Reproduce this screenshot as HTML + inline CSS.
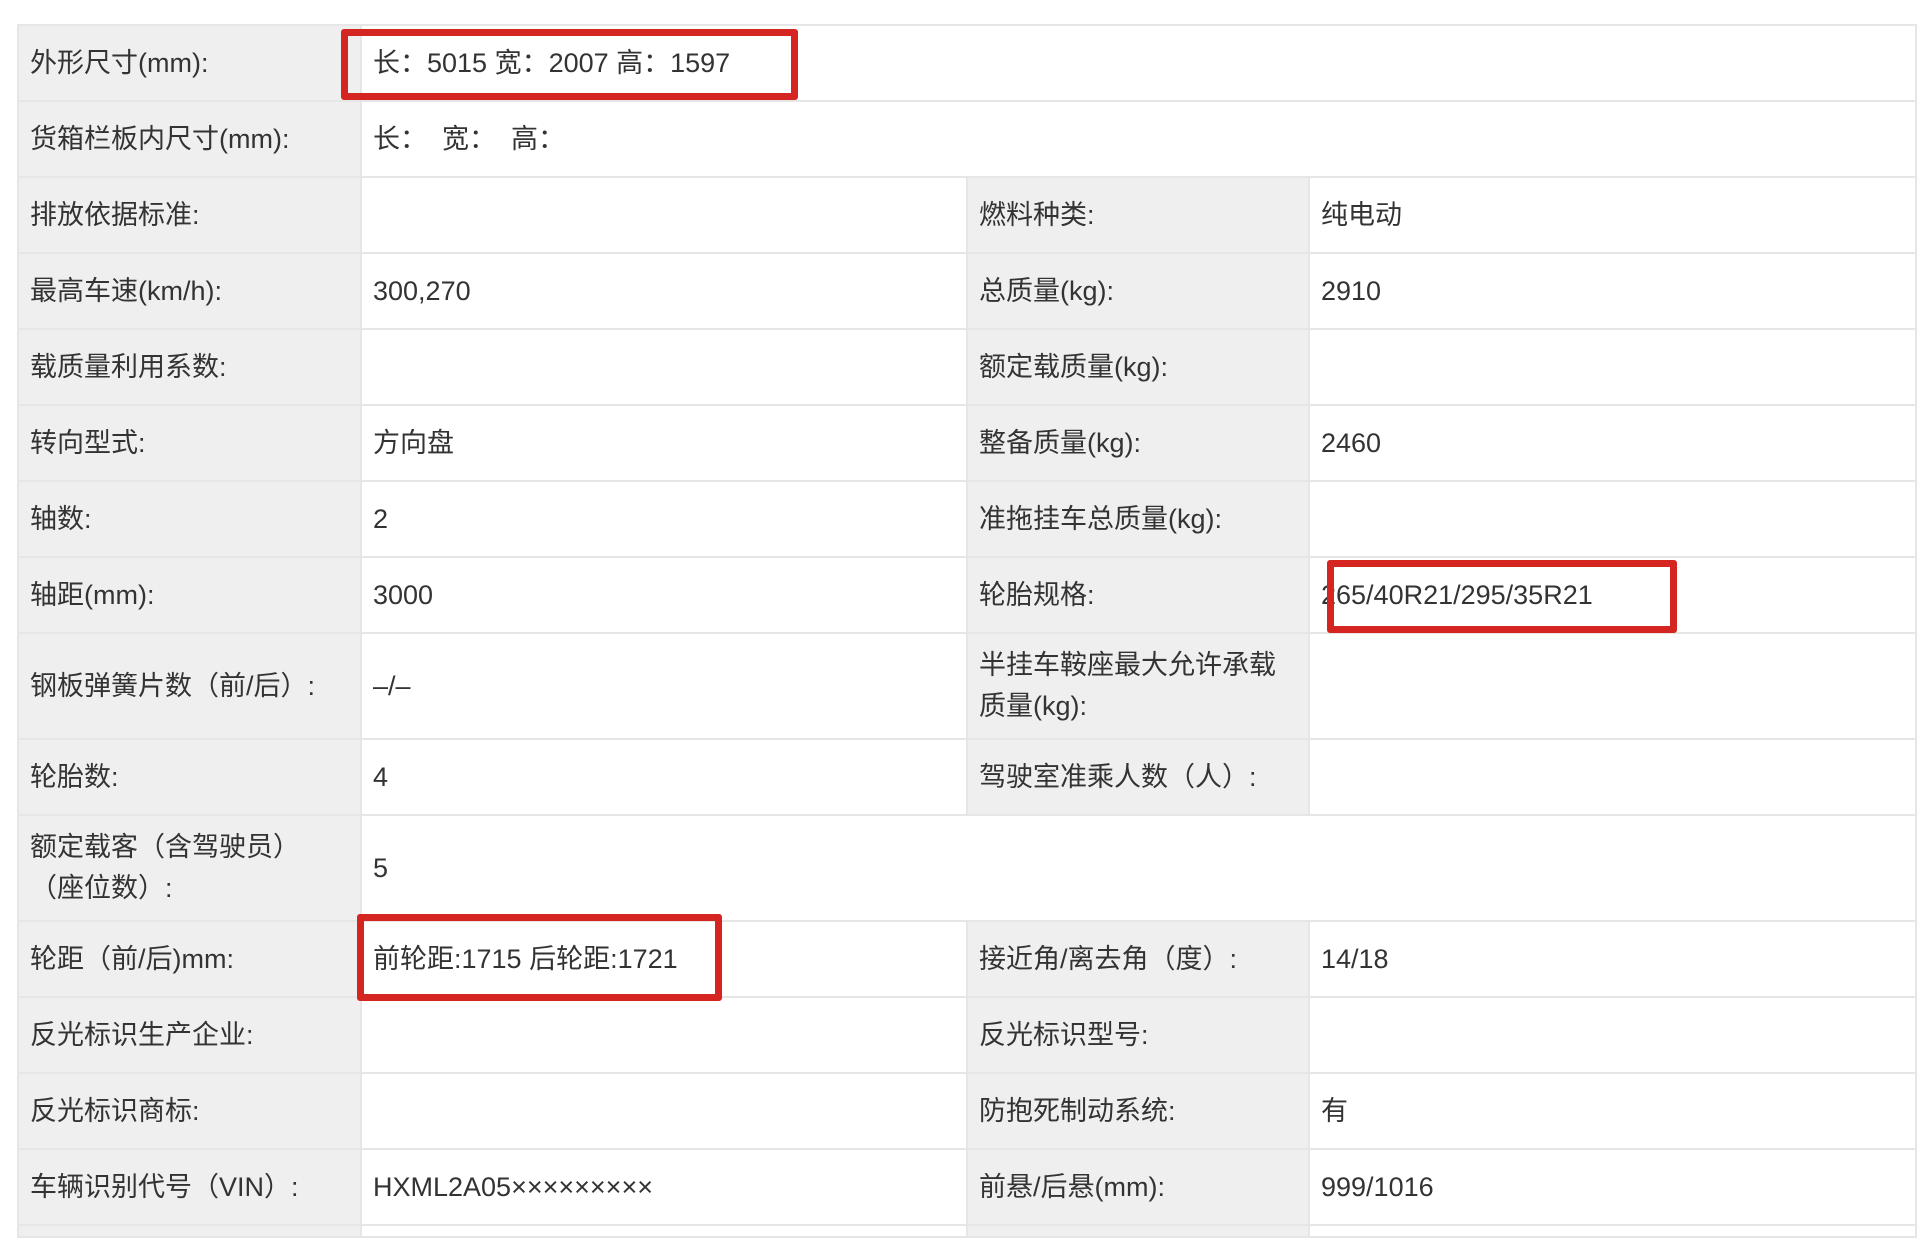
<!DOCTYPE html>
<html><head><meta charset="utf-8"><style>
html,body{margin:0;padding:0;background:#fff;width:1928px;height:1234px;overflow:hidden}
body{font-family:"Liberation Sans","Noto Sans CJK SC",sans-serif;color:#333;font-size:27px}
table{position:absolute;left:17px;top:24px;border-collapse:collapse;table-layout:fixed;width:1898px}
td{border:2px solid #e6e6e6;padding:0 0 0 11px;vertical-align:middle;line-height:41px;white-space:nowrap;overflow:hidden}
td.l{background:#efefef}
tr{height:76px}
tr.t{height:106px}
tr.e{height:12px}
.box{position:absolute;border:7px solid #d52520;border-radius:3px;box-sizing:border-box}
</style></head><body>
<table>
<colgroup><col style="width:343px"><col style="width:606px"><col style="width:342px"><col style="width:607px"></colgroup>
<tr><td class="l">外形尺寸(mm):</td><td colspan="3">长：5015 宽：2007 高：1597</td></tr>
<tr><td class="l">货箱栏板内尺寸(mm):</td><td colspan="3">长：&nbsp; 宽：&nbsp; 高：</td></tr>
<tr><td class="l">排放依据标准:</td><td></td><td class="l">燃料种类:</td><td>纯电动</td></tr>
<tr><td class="l">最高车速(km/h):</td><td>300,270</td><td class="l">总质量(kg):</td><td>2910</td></tr>
<tr><td class="l">载质量利用系数:</td><td></td><td class="l">额定载质量(kg):</td><td></td></tr>
<tr><td class="l">转向型式:</td><td>方向盘</td><td class="l">整备质量(kg):</td><td>2460</td></tr>
<tr><td class="l">轴数:</td><td>2</td><td class="l">准拖挂车总质量(kg):</td><td></td></tr>
<tr><td class="l">轴距(mm):</td><td>3000</td><td class="l">轮胎规格:</td><td>265/40R21/295/35R21</td></tr>
<tr class="t"><td class="l">钢板弹簧片数（前/后）:</td><td>–/–</td><td class="l">半挂车鞍座最大允许承载<br>质量(kg):</td><td></td></tr>
<tr><td class="l">轮胎数:</td><td>4</td><td class="l">驾驶室准乘人数（人）:</td><td></td></tr>
<tr class="t"><td class="l">额定载客（含驾驶员）<br>（座位数）:</td><td colspan="3">5</td></tr>
<tr><td class="l">轮距（前/后)mm:</td><td>前轮距:1715 后轮距:1721</td><td class="l">接近角/离去角（度）:</td><td>14/18</td></tr>
<tr><td class="l">反光标识生产企业:</td><td></td><td class="l">反光标识型号:</td><td></td></tr>
<tr><td class="l">反光标识商标:</td><td></td><td class="l">防抱死制动系统:</td><td>有</td></tr>
<tr><td class="l">车辆识别代号（VIN）:</td><td>HXML2A05×××××××××</td><td class="l">前悬/后悬(mm):</td><td>999/1016</td></tr>
<tr class="e"><td class="l"></td><td></td><td class="l"></td><td></td></tr>
</table>
<div class="box" style="left:341px;top:29px;width:457px;height:71px"></div>
<div class="box" style="left:1327px;top:560px;width:350px;height:73px"></div>
<div class="box" style="left:357px;top:914px;width:365px;height:87px"></div>
</body></html>
